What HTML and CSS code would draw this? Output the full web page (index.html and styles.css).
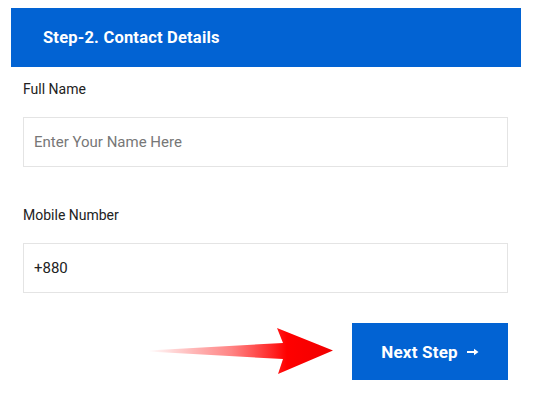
FILE: index.html
```html
<!DOCTYPE html>
<html lang="en">
<head>
    <meta charset="UTF-8">
    <title>Contact Details</title>
    <link rel="stylesheet" href="styles.css">
</head>
<body>
    <div class="step-box">
        <h2 class="step-title">Step-2. Contact Details</h2>

        <div class="step-form">
            <label class="field-label" for="full-name">Full Name</label>
            <input class="field-input" id="full-name" type="text" placeholder="Enter Your Name Here">

            <label class="field-label field-label-gap" for="mobile">Mobile Number</label>
            <input class="field-input" id="mobile" type="text" value="+880">

            <div class="step-actions">
                <svg class="pointer-arrow" width="190" height="50" viewBox="0 0 190 50">
                    <defs>
                        <linearGradient id="arrowFade" x1="0" y1="0" x2="1" y2="0">
                            <stop offset="0" stop-color="#ff0000" stop-opacity="0"/>
                            <stop offset="0.45" stop-color="#ff2020" stop-opacity="0.55"/>
                            <stop offset="0.75" stop-color="#ff0000" stop-opacity="1"/>
                            <stop offset="1" stop-color="#f00000" stop-opacity="1"/>
                        </linearGradient>
                    </defs>
                    <polygon points="2,23.5 137,16 131,1 187,23.5 132,47 137,32 2,24.5" fill="url(#arrowFade)"/>
                </svg>
                <button class="next-button" type="button">
                    Next Step
                    <svg class="next-arrow" width="12" height="8" viewBox="0 0 12 8">
                        <path d="M0 4h8" stroke="#fff" stroke-width="2"/>
                        <path d="M7 0.8L11.5 4L7 7.2z" fill="#fff"/>
                    </svg>
                </button>
            </div>
        </div>
    </div>
</body>
</html>
```

FILE: styles.css
```css
body {
    margin: 0;
    background: #fff;
    font-family: Roboto, "Liberation Sans", sans-serif;
}
.step-box {
    padding-top: 8px;
}
.step-title {
    margin: 0 20px 0 11px;
    height: 59px;
    box-sizing: border-box;
    padding: 0 32px;
    display: flex;
    align-items: center;
    background: #0263d3;
    color: #fff;
    font-size: 16.5px;
    font-weight: 700;
    letter-spacing: 0.2px;
}
.step-form {
    display: flex;
    flex-direction: column;
    padding: 12px 33px 0 23px;
}
.field-label {
    font-size: 14px;
    line-height: 20px;
    color: #222;
    margin-bottom: 18px;
}
.field-label-gap {
    margin-top: 38px;
}
.field-input {
    height: 50px;
    box-sizing: border-box;
    border: 1px solid #e4e4e4;
    padding: 0 10px;
    font-family: inherit;
    font-size: 15px;
    color: #222;
    outline: none;
}
.field-input::placeholder {
    color: #777;
}
.step-actions {
    display: flex;
    justify-content: flex-end;
    align-items: center;
    margin-top: 30px;
}
.pointer-arrow {
    margin-right: 16px;
}
.next-button {
    width: 156px;
    height: 57px;
    border: none;
    background: #0263d3;
    color: #fff;
    font-family: inherit;
    font-size: 17px;
    font-weight: 700;
    letter-spacing: 0.2px;
    cursor: pointer;
    display: flex;
    align-items: center;
    justify-content: center;
}
.next-arrow {
    margin-left: 9px;
}
```
